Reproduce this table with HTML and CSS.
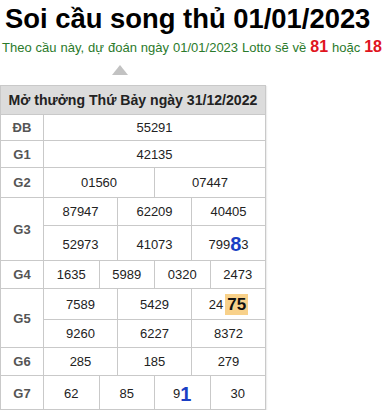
FILE: index.html
```html
<!DOCTYPE html>
<html lang="vi">
<head>
<meta charset="utf-8">
<title>Soi cầu song thủ 01/01/2023</title>
<link rel="stylesheet" href="styles.css">
</head>
<body>
<h1 class="title">Soi cầu song thủ 01/01/2023</h1>
<p class="predict">Theo cầu này, dự đoán ngày 01/01/2023 Lotto sẽ về <b class="num">81</b> hoặc <b class="num">18</b></p>
<div class="arrow-row"><span class="arrow"></span></div>
<div class="kq">
  <div class="head">Mở thưởng Thứ Bảy ngày 31/12/2022</div>

  <div class="lbl h-db">ĐB</div>
  <div class="c c12 h-db">55291</div>

  <div class="lbl h-g1">G1</div>
  <div class="c c12 h-g1">42135</div>

  <div class="lbl h-g2">G2</div>
  <div class="c c6 h-g2">01560</div>
  <div class="c c6 h-g2">07447</div>

  <div class="lbl r2">G3</div>
  <div class="c c4 h-27">87947</div>
  <div class="c c4 h-27">62209</div>
  <div class="c c4 h-27">40405</div>
  <div class="c c4 h-34">52973</div>
  <div class="c c4 h-34">41073</div>
  <div class="c c4 h-34">799<b class="big">8</b>3</div>

  <div class="lbl h-27">G4</div>
  <div class="c c3 h-27">1635</div>
  <div class="c c3 h-27">5989</div>
  <div class="c c3 h-27">0320</div>
  <div class="c c3 h-27">2473</div>

  <div class="lbl r2">G5</div>
  <div class="c c4 h-30">7589</div>
  <div class="c c4 h-30">5429</div>
  <div class="c c4 h-30">24<b class="hl">75</b></div>
  <div class="c c4 h-27">9260</div>
  <div class="c c4 h-27">6227</div>
  <div class="c c4 h-27">8372</div>

  <div class="lbl h-27">G6</div>
  <div class="c c4 h-27">285</div>
  <div class="c c4 h-27">185</div>
  <div class="c c4 h-27">279</div>

  <div class="lbl h-33">G7</div>
  <div class="c c3 h-33">62</div>
  <div class="c c3 h-33">85</div>
  <div class="c c3 h-33">9<b class="big">1</b></div>
  <div class="c c3 h-33">30</div>
</div>
</body>
</html>
```

FILE: styles.css
```css
* { box-sizing: border-box; }
body {
  margin: 0;
  font-family: "Liberation Sans", Arial, sans-serif;
  color: #222;
  background: #fff;
}
.title {
  margin: 0;
  padding: 4px 0 0 5px;
  font-size: 27.4px;
  line-height: 30px;
  font-weight: bold;
  color: #000;
  white-space: nowrap;
}
.predict {
  margin: 4px 0 0 2px;
  font-size: 13px;
  line-height: 18px;
  color: #2b7a2b;
  white-space: nowrap;
  word-spacing: 0.35px;
}
.predict .num {
  color: #e0141e;
  font-size: 16px;
}
.arrow-row {
  height: 28px;
  padding: 8px 0 0 112px;
}
.arrow {
  display: block;
  width: 0;
  height: 0;
  border-left: 8px solid transparent;
  border-right: 8px solid transparent;
  border-bottom: 10px solid #c2c2c2;
}
.kq {
  width: 266px;
  display: grid;
  grid-template-columns: 42px repeat(12, 1fr);
  gap: 1px;
  background: #c9c9c9;
  border: 1px solid #c9c9c9;
  font-size: 13px;
  box-shadow: 1px 1px 1px #eee;
}
.kq > div {
  background: #fff;
  display: flex;
  align-items: center;
  justify-content: center;
}
.kq > .head {
  grid-column: 1 / -1;
  background: #dcdcdc;
  font-weight: bold;
  color: #222;
  font-size: 14.1px;
  height: 28px;
  white-space: nowrap;
}
.kq > .lbl {
  font-weight: bold;
  color: #555;
  font-size: 13px;
}
.kq > .r2 { grid-row: span 2; }
.c12 { grid-column: span 12; }
.c6 { grid-column: span 6; }
.c4 { grid-column: span 4; }
.c3 { grid-column: span 3; }
.kq > .h-db { height: 25px; }
.kq > .h-g1 { height: 26px; }
.kq > .h-g2 { height: 29px; }
.kq > .h-27 { height: 27px; }
.kq > .h-30 { height: 30px; }
.kq > .h-33 { height: 33px; padding-top: 2px; }
.kq > .h-34 { height: 34px; padding-top: 2px; }
.big {
  color: #1a3fc4;
  font-size: 20px;
  line-height: 20px;
}
.hl {
  background: #f8d18a;
  color: #111;
  font-size: 17px;
  line-height: 21px;
  padding: 0 2px;
  margin-left: 2px;
}
```
